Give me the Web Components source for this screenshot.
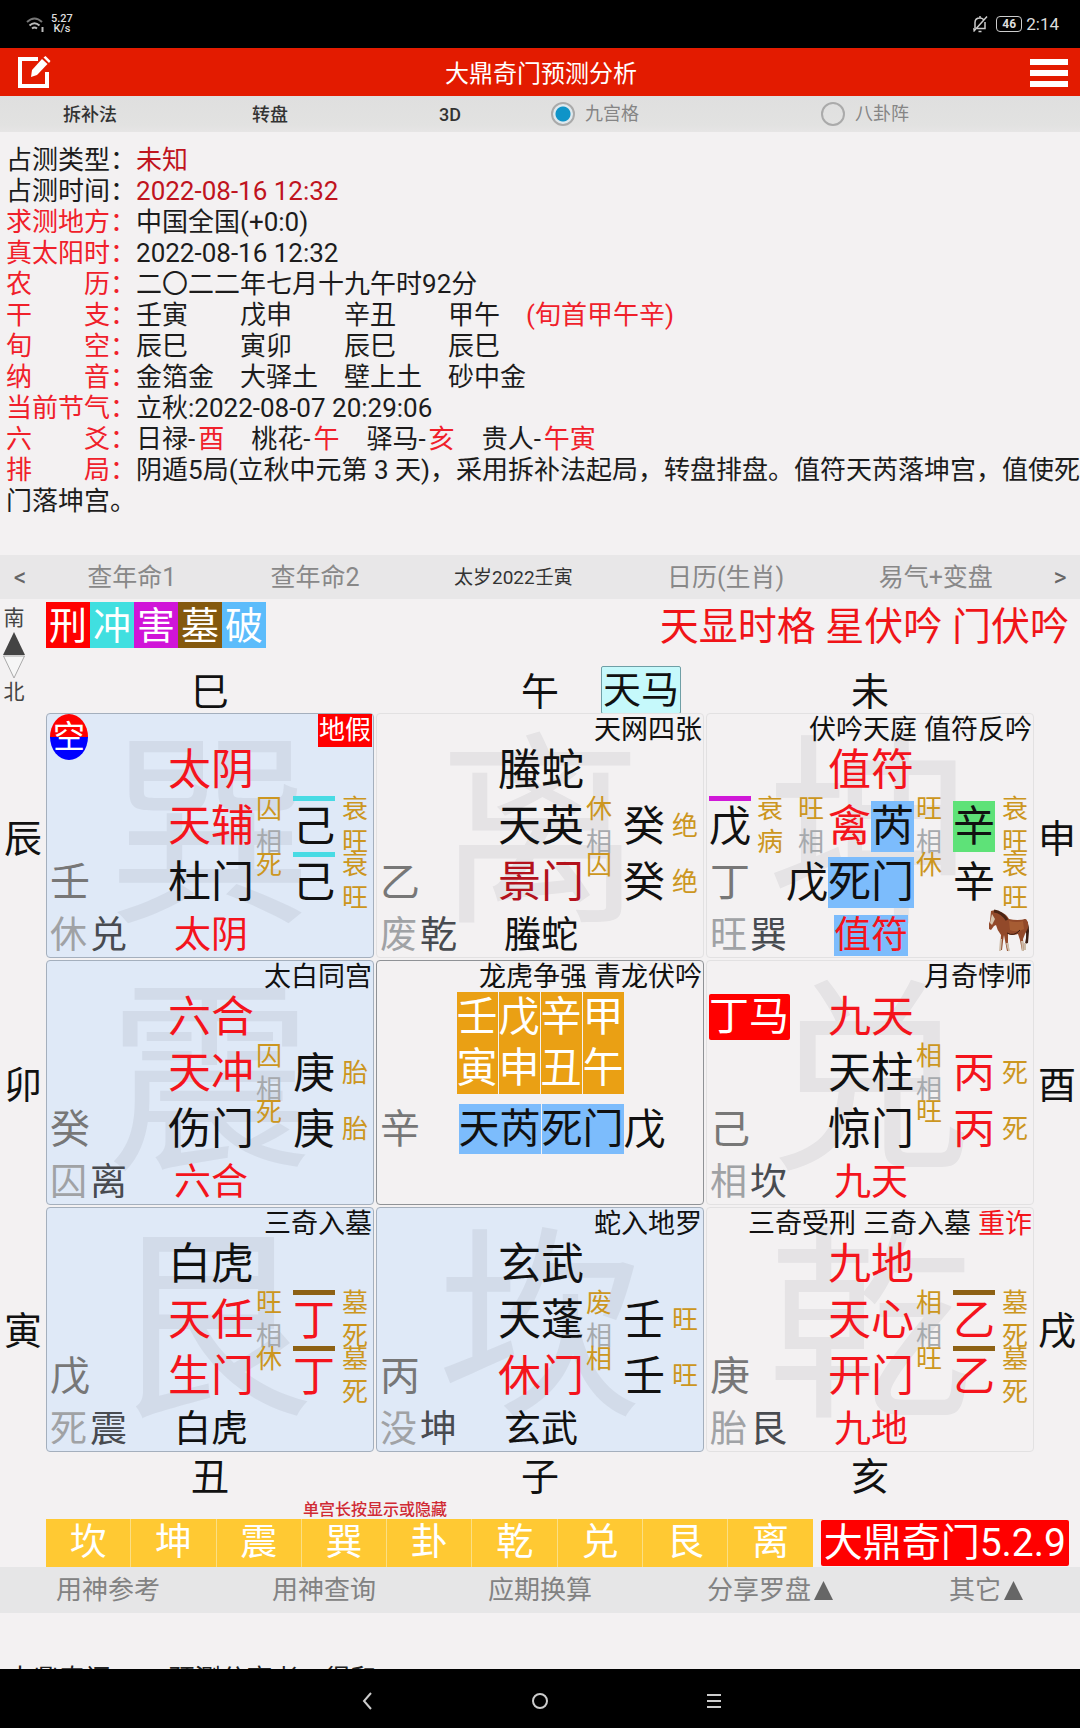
<!DOCTYPE html>
<html lang="zh-CN">
<head>
<meta charset="utf-8">
<meta name="viewport" content="width=device-width, initial-scale=1">
<title>大鼎奇门预测分析</title>
<style>
html,body{margin:0}
body{background:#f3f1f2;color:#111;font-family:Roboto,"Noto Sans CJK SC",sans-serif}
</style>
</head>
<body>
<qm-app></qm-app>
<script>
const define = (name, html, after) => {
  const tpl = document.createElement('template');
  tpl.innerHTML = html;
  customElements.define(name, class extends HTMLElement {
    constructor() {
      super();
      this.attachShadow({mode: 'open'}).append(tpl.content.cloneNode(true));
    }
    connectedCallback() { if (after) after(this, this.shadowRoot); }
  });
};

/* System status bar */
define('status-bar', `
<style>
:host{display:flex;justify-content:space-between;align-items:center;height:48px;padding:0 21px 0 26px;background:#000;color:#ddd;box-sizing:border-box}
.side{display:flex;align-items:center}
.net{font-size:11px;line-height:10px;font-weight:500;text-align:center;margin-left:6px}
.time{font-size:17px;line-height:20px;margin-left:4px}
.bat{margin-left:8px;width:24px;height:14px;border:1px solid #ccc;border-radius:4px;font-size:12px;line-height:14px;text-align:center;font-weight:700}
svg{display:block}
</style>
<div class="side">
<svg width="19" height="18" viewBox="0 0 19 18" fill="none" stroke="#bbb" stroke-width="2"><path d="M1 7q7.500-7 15 0" stroke="#777"/><path d="M3.500 10.500q5-4.500 10 0"/><path d="M6 13.500q2.500-2 5 0"/><path d="M16.500 12v5"/></svg>
<div class="net">5.27<br>K/s</div></div>
<div class="side">
<svg width="16" height="18" viewBox="0 0 16 18" fill="none" stroke="#ccc" stroke-width="1.500"><path d="M3 13V7.500Q3 3 8 3q2 0 3.500 1.500M13 7v6.500H5M1 14h3M6.500 16.500h3M8 1v2M1.500 16.500L15 1.500"/></svg>
<div class="bat">46</div><div class="time">2:14</div></div>`);

/* Red title bar */
define('title-bar', `
<style>
:host{display:flex;align-items:center;justify-content:space-between;height:48px;padding:1px 12px 0 16px;background:#e31b00;color:#fff;box-sizing:border-box}
h1{margin:0;font-size:24px;line-height:32px;padding-top:2px;font-weight:400}
button{border:0;padding:0;background:none;color:#fff;display:block}
svg{display:block}
</style>
<button aria-label="edit"><svg width="36" height="36" viewBox="0 0 36 36"><path d="M22 4H4v27h27V17" fill="none" stroke="#fff" stroke-width="4"/><path d="M15 22l1-7L26 4l5.500 5L21 20z" fill="#fff"/><path d="M27.500 2.500l2-1.500 5 5-1.500 2z" fill="#fff"/></svg></button>
<h1><slot></slot></h1>
<button aria-label="menu"><svg width="38" height="30" viewBox="0 0 38 30" fill="#fff"><path d="M0 1h38v6H0zM0 12h38v6H0zM0 23h38v6H0z"/></svg></button>`);

/* Method buttons and layout radios */
define('mode-bar', `
<style>
:host{display:grid;grid-template-columns:repeat(3,2fr) repeat(2,3fr);align-items:center;height:36px;background:linear-gradient(#dfdfdf,#e2e2e1 80%,#e6e5e5)}
button{border:0;background:none;padding:1px 0 0;font:500 18px/24px Roboto,"Noto Sans CJK SC",sans-serif;color:#333}
label{display:flex;align-items:center;gap:10px;padding-left:11px;font-size:18px;line-height:24px;color:#858585}
input{appearance:none;margin:0;width:24px;height:24px;border:2px solid #aaa;border-radius:50%}
input:checked{background:radial-gradient(circle,#0f94c8 0 7px,#dfe9ee 8px)}
</style>
<button>拆补法</button><button>转盘</button><button>3D</button>
<label><input type="radio" name="m" checked>九宫格</label>
<label><input type="radio" name="m">八卦阵</label>`);

/* One row of the reading: label + value */
define('info-row', `
<style>
:host{display:block;font-size:26px;line-height:31px;white-space:nowrap;color:#1c1c1c}
.k{color:#f0202a}
:host([dark]) .k{color:inherit}
:host([hot]) .v{color:#c0141e}
::slotted(b){font-weight:400;color:#f0202a}
::slotted(i){font-style:normal;margin-right:27px}
</style><span class="k"></span><span class="v"><slot></slot></span>`,
(el, r) => { r.querySelector('.k').textContent = el.getAttribute('label') + '：'; });

define('info-panel', `
<style>:host{display:block;padding:13px 0 38px 6px}i b{font-weight:400;color:#f0202a;margin-left:3px}</style>
<info-row dark hot label="占测类型">未知</info-row>
<info-row dark hot label="占测时间">2022-08-16 12:32</info-row>
<info-row label="求测地方">中国全国(+0:0)</info-row>
<info-row label="真太阳时">2022-08-16 12:32</info-row>
<info-row label="农　　历">二〇二二年七月十九午时92分</info-row>
<info-row label="干　　支">壬寅　　戊申　　辛丑　　甲午　<b>(旬首甲午辛)</b></info-row>
<info-row label="旬　　空">辰巳　　寅卯　　辰巳　　辰巳</info-row>
<info-row label="纳　　音">金箔金　大驿土　壁上土　砂中金</info-row>
<info-row label="当前节气">立秋:2022-08-07 20:29:06</info-row>
<info-row label="六　　爻"><i>日禄-<b>酉</b></i><i>桃花-<b>午</b></i><i>驿马-<b>亥</b></i><i>贵人-<b>午寅</b></i></info-row>
<info-row label="排　　局">阴遁5局(立秋中元第 3 天)，采用拆补法起局，转盘排盘。值符天芮落坤宫，值使死<br>门落坤宫。</info-row>`);

define('year-nav', `
<style>
:host{display:flex;align-items:center;height:44px;background:#e8e7e8}
button{border:0;background:none;padding:2px 0 0;flex:1 1 auto;font:400 25px/32px Roboto,"Noto Sans CJK SC",sans-serif;color:#888}
.a{flex:0 0 40px;color:#666}
.s{font-size:19px;color:#333}
</style>
<button class="a">&lt;</button><button>查年命1</button><button>查年命2</button><button class="s">太岁2022壬寅</button><button>日历(生肖)</button><button>易气+变盘</button><button class="a">&gt;</button>`);

/* A single palace of the 3x3 plate; its content comes from the data property */
const PALACE_CSS = `
<style>
:host{display:grid;grid-template-columns:minmax(0,1fr);height:245px;box-sizing:border-box;border:1px solid #e2e1e2;border-radius:4px;position:relative;white-space:nowrap}
:host(.blue){background:#dfe9f7;border-color:#a4afbd}
:host(.mid){border-color:#8f9296}
.wm,.body{grid-area:1/1}
.wm{font-size:206px;line-height:243px;text-align:center;color:rgba(60,70,80,.08)}
.body{position:relative;display:grid;grid-template-rows:28px 56px 56px 56px 1fr;font-size:43px;color:#111}
.top{display:flex;justify-content:flex-end;gap:7px;font-size:27px;line-height:33px;padding-right:1px}
.tag{background:#f00;color:#fff;font-size:26px;padding:0 1px;height:33px}
.kong{position:absolute;left:3px;top:0;width:38px;height:46px;border-radius:50%;background:linear-gradient(#f00 50%,#00f 50%);color:#fff;font-size:32px;line-height:46px;display:flex;justify-content:center}
.row{display:flex;align-items:center;height:56px}
.l,.r{flex:1 1 0;display:flex;align-items:center;min-width:0}
.l{padding-left:2px}
.m{display:flex;line-height:51px}
.push{margin-left:auto}
.sub{width:27px;font-size:26px;line-height:33px;color:#cc9620;display:flex;flex-direction:column;margin:0 3px}
.sub u{text-decoration:none;height:33px}
.sub u.g{color:#a6a9ad}
.stem{font-size:42px;line-height:51px;width:42px;position:relative}
.stem.bar::before{content:"";position:absolute;left:0;right:0;top:-5px;height:5px;background:var(--bar)}
.r .sub{margin:0 3px 0 2px}
.r .stem{margin-left:7px;margin-right:5px}
.l .sub{margin:0 5px 0 6px}
.l .push{margin:0 3px 0 auto}
.hid{font-size:40px;line-height:51px;color:#777;margin-left:1px}
.ph{font-size:37px;color:#a0a2a5;margin-left:1px}
.gua{font-size:37px;color:#484b50;margin-left:3px}
.low{font-size:37px}
.last{height:47px;padding-top:4px;box-sizing:border-box;line-height:41px}
.red{color:#f4141c}.dk{color:#b3121c}
.hl{background:#7cbcfc}.grn{background:#5ee278}
.box{background:#f00;color:#fff;font-size:40px;line-height:46px;width:81px;border-radius:2px}
.pill{display:grid;grid-template-columns:repeat(4,41px);gap:0 1px;font-size:41px;line-height:51px;text-align:center;color:#fff}
.pill span{background:#eaa014}
.span2{height:102px;align-self:start;margin-top:3px;display:flex;justify-content:center;grid-row:2/4}
.duty{display:flex;gap:1px;font-size:41px;line-height:50px}
.duty + .r .stem{margin:0}
.horse{position:absolute;right:2px;bottom:4px}
</style>`;
const span = ([t, c = '']) => `<span class="${c}">${t}</span>`;
const sub = (a, extra = '') => a ? `<span class="sub ${extra}">${a.length === 1 && !extra.includes('two') ? `<u>${a}</u>` : [...a].map((c, i) => `<u class="${extra.includes('two') && i ? 'g' : ''}">${c}</u>`).join('') + (a.length === 1 ? '<u></u>' : '')}</span>` : '';
const stem = s => { if (!s) return ''; const [t, c = '', bar] = s; return `<span class="stem ${c} ${bar ? 'bar' : ''}" ${bar ? `style="--bar:${bar}"` : ''}>${t}</span>`; };
const HORSE = `<svg class="horse" width="42" height="44" viewBox="0 0 42 44"><path d="M35 10q5 2 5 12l-1 12-3 1q3-12-2-22z" fill="#3a1c12"/><path d="M2 2l4-1 4 2q7 1 10 7 8 2 17 0 3 3 2 9l-3 6-2 5 1 12h-2l-2-11-2-6q-6 2-10 0l0 8 1 9h-2l-3-16-1 6-1 9h-2l1-15q-4-5-5-10l-2 1-3 4-2-1-1-3 2-5z" fill="#92492a"/><path d="M5 2q8 1 13 9" fill="none" stroke="#4a2414" stroke-width="3"/><path d="M3 5l-2 9 2 2 3-6z" fill="#d8c6b0"/><path d="M12 30l-1 12M18 34l2 8M33 32l1 10M36 34v7" stroke="#cdbca8" stroke-width="2" fill="none"/><path d="M20 12q8 2 14 0l1 8q-7 4-14 1z" fill="#a65c33"/><path d="M18 24q7 4 13-3" stroke="#3a1c12" fill="none"/></svg>`;
customElements.define('qm-palace', class extends HTMLElement {
  constructor() { super(); this.attachShadow({mode: 'open'}); }
  set data(d) {
    this.className = d.cls || '';
    const mid = d.pillars ? `
      <div class="span2"><div class="pill">${[...d.pillars].map(c => `<span>${c}</span>`).join('')}</div></div>
      <div class="row"><div class="l"><span class="hid">${d.hid}</span></div><div class="duty"><span class="hl">天芮</span><span class="hl">死门</span></div><div class="r"><span class="stem">戊</span></div></div>` : `
      <div class="row"><div class="l">${d.box ? `<span class="box">${d.box}</span>` : ''}</div><div class="m">${span(d.god)}</div><div class="r"></div></div>
      <div class="row"><div class="l">${stem(d.lstem)}${sub(d.lsub)}${d.lstar ? sub(d.lstar, 'two push') : ''}</div><div class="m">${d.star.map(span).join('')}</div><div class="r">${sub(d.s1, 'two')}${stem(d.sky)}${sub(d.skyS)}</div></div>
      <div class="row"><div class="l"><span class="hid">${d.hid}</span>${d.extra ? `<span class="stem push" style="margin-right:0">${d.extra}</span>` : ''}</div><div class="m">${span(d.gate)}</div><div class="r">${sub(d.s2, 'two')}${stem(d.earth)}${sub(d.earthS || d.skyS)}</div></div>
      <div class="row last"><div class="l"><span class="ph">${d.ph}</span><span class="gua">${d.gua}</span></div><div class="low ${d.god[1] || ''} ${d.lowHl ? 'hl' : ''}">${d.god[0]}</div><div class="r"></div></div>`;
    this.shadowRoot.innerHTML = PALACE_CSS + `<div class="wm" aria-hidden="true">${d.wm || ''}</div><div class="body"><div class="top">${d.top.map(span).join('')}</div>${mid}${d.kong ? '<span class="kong">空</span>' : ''}${d.horse ? HORSE : ''}</div>`;
  }
});

const R = 'red', CY = '#48dbe4', BR = '#8d6114', MG = '#d018d8';
const PALACES = [
 {cls:'blue',wm:'巽',kong:1,top:[['地假','tag']],god:['太阴',R],star:[['天辅',R]],gate:['杜门'],s1:'囚相',s2:'死',sky:['己','',CY],skyS:'衰旺',earth:['己','',CY],hid:'壬',ph:'休',gua:'兑'},
 {wm:'离',top:[['天网四张']],god:['螣蛇'],star:[['天英']],gate:['景门','dk'],s1:'休相',s2:'囚',sky:['癸'],skyS:'绝',earth:['癸'],hid:'乙',ph:'废',gua:'乾'},
 {wm:'坤',horse:1,top:[['伏吟天庭'],['值符反吟']],god:['值符',R],lowHl:1,lstem:['戊','',MG],lsub:'衰病',lstar:'旺相',star:[['禽',R],['芮','hl']],gate:['死门','hl'],s1:'旺相',s2:'休',sky:['辛','grn'],skyS:'衰旺',earth:['辛'],extra:'戊',hid:'丁',ph:'旺',gua:'巽'},
 {cls:'blue',wm:'震',top:[['太白同宫']],god:['六合',R],star:[['天冲',R]],gate:['伤门'],s1:'囚相',s2:'死',sky:['庚'],skyS:'胎',earth:['庚'],hid:'癸',ph:'囚',gua:'离'},
 {cls:'mid',top:[['龙虎争强'],['青龙伏吟']],pillars:'壬戊辛甲寅申丑午',hid:'辛'},
 {wm:'兑',box:'丁马',top:[['月奇悖师']],god:['九天',R],star:[['天柱']],gate:['惊门'],s1:'相相',s2:'旺',sky:['丙',R],skyS:'死',earth:['丙',R],hid:'己',ph:'相',gua:'坎'},
 {cls:'blue',wm:'艮',top:[['三奇入墓']],god:['白虎'],star:[['天任',R]],gate:['生门',R],s1:'旺相',s2:'休',sky:['丁',R,BR],skyS:'墓死',earth:['丁',R,BR],hid:'戊',ph:'死',gua:'震'},
 {cls:'blue',wm:'坎',top:[['蛇入地罗']],god:['玄武'],star:[['天蓬']],gate:['休门',R],s1:'废相',s2:'相',sky:['壬'],skyS:'旺',earth:['壬'],hid:'丙',ph:'没',gua:'坤'},
 {wm:'乾',top:[['三奇受刑'],['三奇入墓'],['重诈',R]],god:['九地',R],star:[['天心',R]],gate:['开门',R],s1:'相相',s2:'旺',sky:['乙',R,BR],skyS:'墓死',earth:['乙',R,BR],hid:'庚',ph:'胎',gua:'艮'}
];

define('compass-mark', `
<style>:host{display:flex;flex-direction:column;align-items:center;width:28px;font-size:21px;line-height:26px;color:#444;padding-top:6px}svg{display:block}</style>
南<svg width="24" height="48" viewBox="0 0 24 48"><path d="M12 1l11 23H1z" fill="#444"/><path d="M1.500 25h21L12 47z" fill="#f6f6f6" stroke="#aaa"/></svg>北`);

define('qm-board', `
<style>
:host{display:grid;grid-template-columns:46px minmax(0,1fr) 46px;font-size:38px;color:#111}
compass-mark{grid-area:1/1/3/2}
.head{grid-area:1/2/2/4;display:flex;justify-content:space-between;align-items:center;height:52px;padding-right:11px}
.tags{display:flex;color:#fff;font-size:38px;line-height:44px;text-align:center}
.tags span{width:44px;padding-top:2px}
.pat{font-size:39px;line-height:44px;padding-top:4px;color:#f01418}
.x{grid-column:2;display:grid;grid-template-columns:repeat(3,1fr);gap:2px}
.x div{display:grid;grid-template-columns:1fr auto 1fr;align-items:center;height:50px;line-height:48px}
.x .c{grid-column:2}
.t{padding:12px 0 0}
.t .c{padding-top:5px}
.horse{justify-self:start;margin-left:42px;line-height:46px;padding:0 1px;background:#c6f9fb;border:1px solid #6f9fa6;border-radius:2px}
.y{grid-row:3;display:grid;grid-template-rows:repeat(3,1fr);gap:2px;align-items:center;justify-items:center;padding-bottom:3px}
.grid{grid-area:3/2;display:grid;grid-template-columns:repeat(3,minmax(0,1fr));gap:2px}
.b{grid-row:4}
</style>
<compass-mark></compass-mark>
<div class="head"><div class="tags"><span style="background:#f00">刑</span><span style="background:#40dfe0">冲</span><span style="background:#d014d8">害</span><span style="background:#84590e">墓</span><span style="background:#5cbcfb">破</span></div><div class="pat">天显时格 星伏吟 门伏吟</div></div>
<div class="x t"><div><span class="c">巳</span></div><div><span class="c">午</span><span class="horse">天马</span></div><div><span class="c">未</span></div></div>
<div class="y" style="grid-column:1"><span>辰</span><span>卯</span><span>寅</span></div>
<div class="grid"></div>
<div class="y" style="grid-column:3"><span>申</span><span>酉</span><span>戌</span></div>
<div class="x b"><div><span class="c">丑</span></div><div><span class="c">子</span></div><div><span class="c">亥</span></div></div>`,
(el, r) => {
  const g = r.querySelector('.grid');
  PALACES.forEach(d => { const p = document.createElement('qm-palace'); p.data = d; g.append(p); });
});

define('gua-bar', `
<style>
:host{display:block;padding:0 11px 0 46px}
.hint{font-size:16px;line-height:16px;padding-bottom:1px;color:#d02a34;font-weight:500;padding-left:257px}
.row{display:flex;gap:8px;align-items:center}
.k{flex:1;display:grid;grid-template-columns:repeat(9,1fr);gap:1px;background:#fbdf85}
.k button{border:0;padding:0;background:#ffc933;color:#fff;font:400 37px/48px Roboto,"Noto Sans CJK SC",sans-serif}
.v{background:#f00;color:#fff;font-size:39px;line-height:46px;padding:0 3px;border-radius:2px}
</style>
<div class="hint">单宫长按显示或隐藏</div>
<div class="row"><div class="k"><button>坎</button><button>坤</button><button>震</button><button>巽</button><button>卦</button><button>乾</button><button>兑</button><button>艮</button><button>离</button></div><div class="v">大鼎奇门5.2.9</div></div>`);

define('tool-bar', `
<style>
:host{display:grid;grid-template-columns:repeat(5,1fr);align-items:center;height:46px;background:#e6e6e7}
button{border:0;background:none;padding:0;display:flex;justify-content:center;align-items:center;gap:3px;font:400 26px/34px Roboto,"Noto Sans CJK SC",sans-serif;color:#828282}
.w{padding-left:28px}
svg{display:block}
</style>
<button>用神参考</button><button>用神查询</button><button>应期换算</button>
<button class="w">分享罗盘<svg width="19" height="19"><path d="M9.500 0L19 19H0z" fill="#666"/></svg></button>
<button class="w">其它<svg width="19" height="19"><path d="M9.500 0L19 19H0z" fill="#666"/></svg></button>`);

define('system-nav', `
<style>
:host{display:flex;justify-content:center;align-items:center;gap:150px;height:59px;padding-top:5px;box-sizing:border-box;background:#000;position:relative}
button{border:0;padding:0;background:none;width:24px;height:24px}
svg{display:block;fill:none;stroke:#ccc;stroke-width:2}
</style>
<button aria-label="back"><svg width="24" height="24"><path d="M17 4l-7 8 7 8"/></svg></button>
<button aria-label="home"><svg width="24" height="24"><circle cx="12" cy="12" r="7"/></svg></button>
<button aria-label="recent"><svg width="24" height="24"><path d="M5 6h14M5 12h14M5 18h14"/></svg></button>`);

define('qm-app', `
<style>
:host{display:flex;flex-direction:column;min-height:100vh}
.more{flex:1;display:flex;flex-direction:column;justify-content:flex-end}
.foot{height:4px;overflow:hidden;font-size:26px;line-height:28px;padding-left:7px;color:#222;white-space:nowrap}
</style>
<status-bar></status-bar>
<title-bar>大鼎奇门预测分析</title-bar>
<mode-bar></mode-bar>
<info-panel></info-panel>
<year-nav></year-nav>
<qm-board></qm-board>
<gua-bar></gua-bar>
<tool-bar></tool-bar>
<div class="more"><div class="foot">大鼎奇门5.2.9预测分享者：得和</div></div>
<system-nav></system-nav>`);
</script>
</body>
</html>
